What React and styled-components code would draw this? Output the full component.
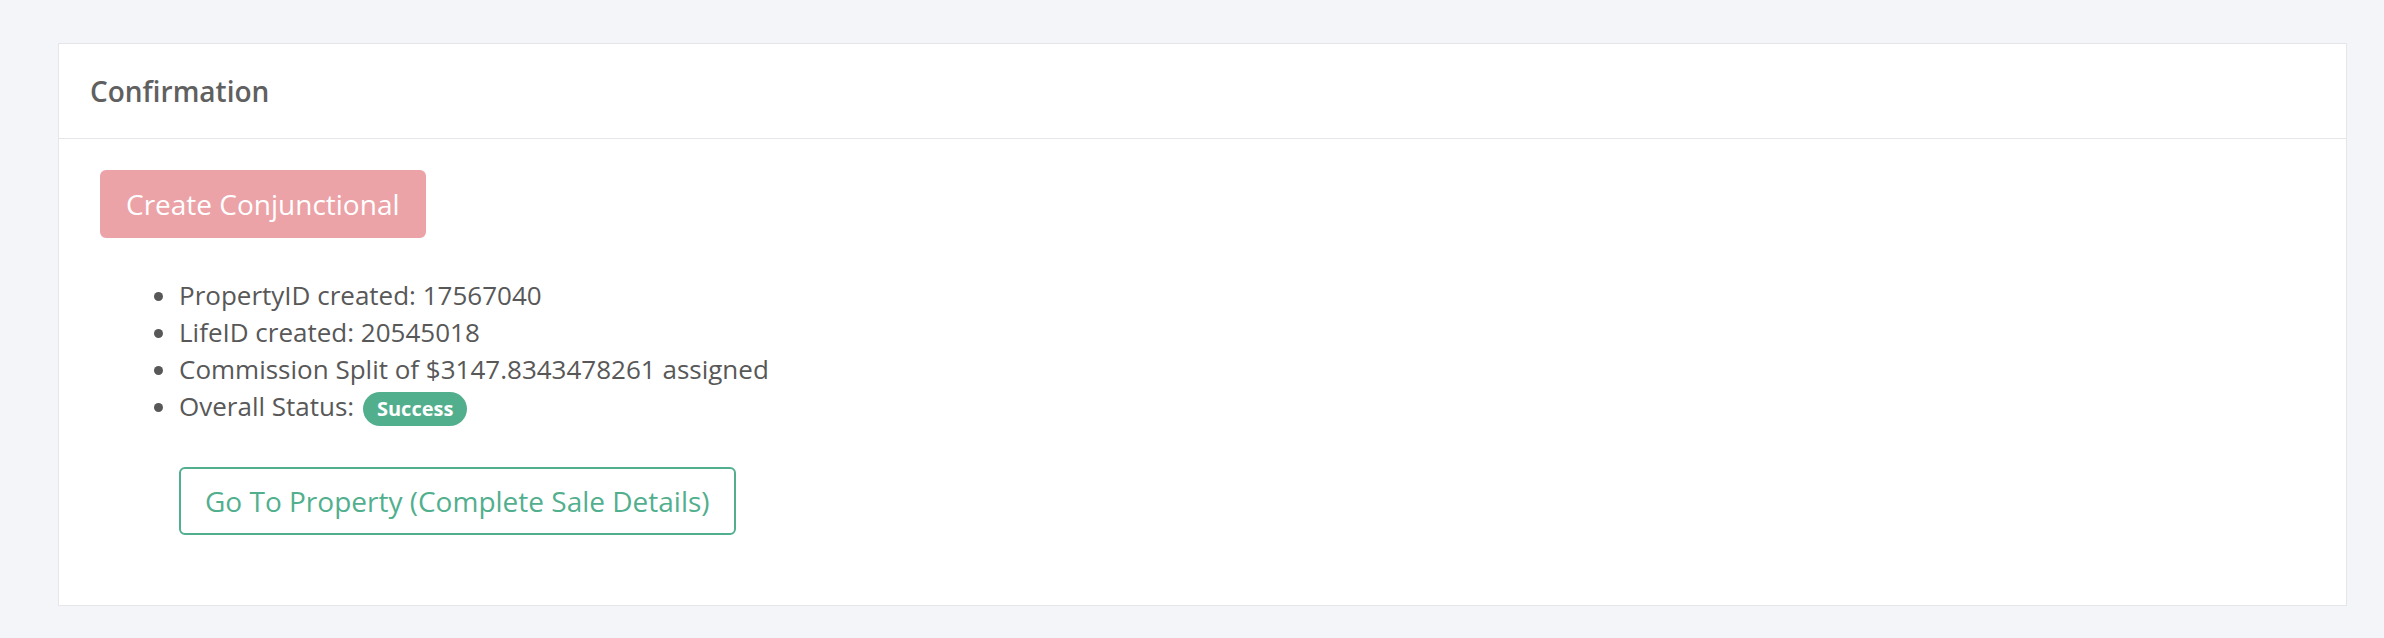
import styled, { createGlobalStyle } from "styled-components"

const GlobalStyle = createGlobalStyle`
  html, body {
    margin: 0;
    padding: 0;
    background-color: #f4f5f9;
    font-family: "Open Sans", "Liberation Sans", sans-serif;
  }
`;

const Page = styled.div`
  min-height: 638px;
  box-sizing: border-box;
  padding: 43px 37px 34px 58px;
  background-color: #f4f5f9;
`;

const Card = styled.div`
  background-color: #ffffff;
  border: 1px solid #e5e6ea;
`;

const CardHeader = styled.div`
  height: 94px;
  display: flex;
  align-items: center;
  padding: 0 31px;
  border-bottom: 1px solid #e5e6ea;
`;

const Title = styled.h3`
  margin: 0;
  font-size: 28px;
  font-weight: 600;
  color: #606060;
`;

const CardBody = styled.div`
  padding: 31px 30px 70px 41px;
`;

const Button = styled.button`
  display: inline-flex;
  align-items: center;
  height: 68px;
  padding: 0 ${(p) => p.$pad || 24}px;
  margin-left: ${(p) => p.$indent || 0}px;
  font-family: inherit;
  font-size: 28px;
  border-radius: 6px;
  cursor: pointer;
  box-sizing: border-box;
  background-color: ${(p) => (p.$outline ? "#ffffff" : p.$color)};
  color: ${(p) => (p.$outline ? p.$color : "#ffffff")};
  border: 2px solid ${(p) => p.$color};
`;

const ResultList = styled.ul`
  margin: 39px 0 41px;
  padding-left: 79px;
  color: #585858;
  font-size: 26px;
  line-height: 37px;
`;

const Item = styled.li`
  margin: 0;
`;

const Badge = styled.span`
  display: inline-block;
  vertical-align: middle;
  margin-left: 2px;
  padding: 0 14px;
  height: 34px;
  line-height: 34px;
  border-radius: 17px;
  background-color: #52af8e;
  color: #ffffff;
  font-size: 20px;
  font-weight: 700;
`;

const App = () => {
  return (
    <>
      <GlobalStyle />
      <Page>
        <Card>
          <CardHeader>
            <Title>Confirmation</Title>
          </CardHeader>
          <CardBody>
            <Button $color="#eba3a8">Create Conjunctional</Button>
            <ResultList>
              <Item>PropertyID created: 17567040</Item>
              <Item>LifeID created: 20545018</Item>
              <Item>Commission Split of $3147.8343478261 assigned</Item>
              <Item>
                Overall Status: <Badge>Success</Badge>
              </Item>
            </ResultList>
            <Button $outline $color="#52af8e" $indent={79}>
              Go To Property (Complete Sale Details)
            </Button>
          </CardBody>
        </Card>
      </Page>
    </>
  )
}

export default App
